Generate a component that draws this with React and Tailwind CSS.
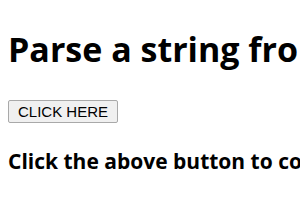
export default function App() {
    return (
        <div className="w-[300px] h-[210px] overflow-hidden bg-white text-black">
            <div className="pl-2 pt-[26px] whitespace-nowrap">
                <h1 className="text-[34px] leading-[46px] font-bold font-['Open_Sans',sans-serif]">
                    Parse a string from a URL
                </h1>

                <button className="mt-[28px] h-[23px] px-[9px] border border-[#a9a9a9] rounded-[2px] bg-[#f0f0f0] text-[15px] leading-[20px] text-black font-['Liberation_Sans',Arial,sans-serif]">
                    CLICK HERE
                </button>

                <p className="mt-[24px] text-[21px] leading-[28px] font-bold font-['Open_Sans',sans-serif]">
                    Click the above button to convert
                </p>
            </div>
        </div>
    );
}
